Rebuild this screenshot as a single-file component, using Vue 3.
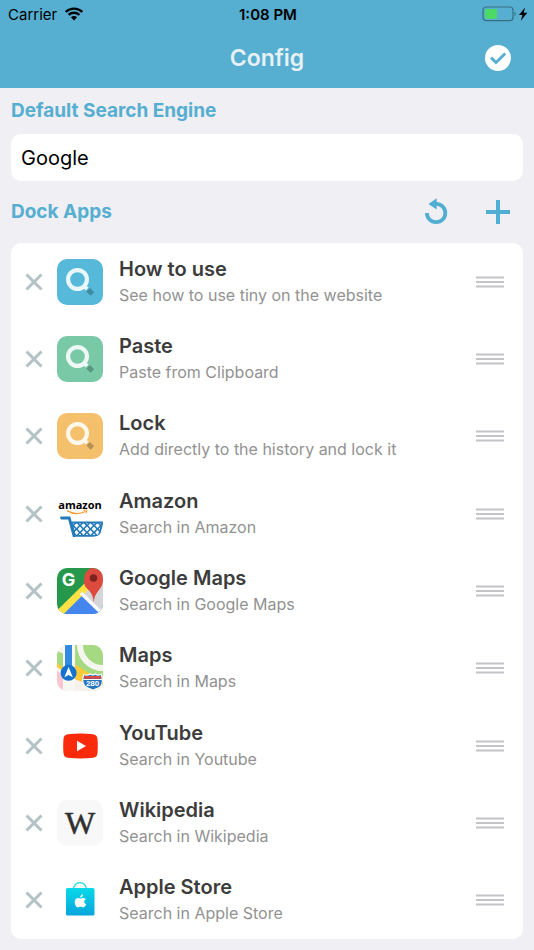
<!-- src/views/ConfigView.vue -->
<template>
  <div class="config-page">
    <header class="top-bar">
      <div class="status-bar">
        <div class="carrier">
          <span>Carrier</span>
          <svg width="18" height="14" viewBox="0 0 18 14" aria-hidden="true">
            <path d="M.7 4.9C5.2.5 12.800.5 17.300 4.900M3.600 7.800c3-2.800 7.800-2.800 10.800 0" fill="none" stroke="#000" stroke-width="2.400" />
            <path d="M5.900 10.200c1.800-1.600 4.400-1.600 6.200 0L9 13.400z" />
          </svg>
        </div>
        <span class="clock">1:08 PM</span>
        <svg class="battery" width="46" height="16" viewBox="0 0 46 16" aria-hidden="true">
          <rect x="1" y="1" width="30" height="13.600" rx="3" fill="none" stroke="#377083" stroke-width="1.200" />
          <rect x="3" y="3" width="12" height="9.800" rx="1" fill="#4cd964" />
          <path d="M32.500 5.600c1.600.8 1.600 3.800 0 4.600z" fill="#377083" />
          <path d="m43 1.500-6 7.400h3.400l-1.600 5.800 6.500-7.900h-3.600z" />
        </svg>
      </div>
      <div class="nav-bar">
        <h1>Config</h1>
        <button class="icon-button done" type="button" aria-label="Done">
          <svg width="26" height="26" viewBox="0 0 26 26">
            <circle cx="13" cy="13" r="13" fill="#fff" />
            <path d="m6 12.600 5 4.900 9.200-9" fill="none" stroke="#56aed0" stroke-width="2.900" />
          </svg>
        </button>
      </div>
    </header>

    <main class="content">
      <label class="section-title" for="engine">Default Search Engine</label>
      <input id="engine" v-model="engine" class="engine-field" type="text" />

      <div class="dock-header">
        <h2 class="section-title">Dock Apps</h2>
        <div class="dock-actions">
          <button class="icon-button" type="button" aria-label="Reset" @click="resetApps">
            <svg width="24" height="28" viewBox="0 0 24 28">
              <path d="M2.900 15A9.200 9.200 0 1 0 12 5.800" fill="none" stroke="#50aed2" stroke-width="3.800" />
              <path d="M12.700.2v11.400L4.500 5.900z" fill="#50aed2" />
            </svg>
          </button>
          <button class="icon-button" type="button" aria-label="Add app">
            <svg width="24" height="24" viewBox="0 0 24 24">
              <path d="M12 0v24M0 12h24" stroke="#50aed2" stroke-width="4" />
            </svg>
          </button>
        </div>
      </div>

      <ul class="app-list">
        <li v-for="app in apps" :key="app.id" class="app-row">
          <button class="icon-button" type="button" :aria-label="'Remove ' + app.name" @click="removeApp(app.id)">
            <svg width="18" height="18" viewBox="0 0 18 18">
              <path d="m1.500 1.500 15 15m0-15-15 15" stroke="#b3c3c5" stroke-width="3" />
            </svg>
          </button>

          <svg class="app-icon" width="46" height="46" viewBox="0 0 46 46" aria-hidden="true">
            <g v-if="app.tint">
              <rect width="46" height="46" :fill="app.tint" />
              <path d="m31.200 30.700 4.200 4.200" stroke="#000" stroke-width="5" opacity=".25" />
              <g fill="none" stroke="#fff">
                <circle cx="20.500" cy="20.500" r="9.400" stroke-width="4.200" opacity=".87" />
                <path d="m28.200 28.200 2 2" stroke-width="4" opacity=".87" />
              </g>
            </g>

            <g v-else-if="app.id === 'amazon'">
              <defs>
                <pattern id="cart-mesh" width="7" height="7" patternUnits="userSpaceOnUse" x="16" y="31">
                  <rect width="7" height="7" fill="#2479b8" />
                  <path d="m3.500 1 2.300 2.500L3.500 6 1.200 3.500zM0-2.500 2.300 0 0 2.500-2.300 0zM7-2.500 9.300 0 7 2.500 4.700 0zM0 4.500 2.300 7 0 9.500-2.300 7zM7 4.500 9.300 7 7 9.500 4.700 7z" fill="#fff" />
                </pattern>
              </defs>
              <text x="23" y="18" text-anchor="middle" class="amazon-word">amazon</text>
              <path d="M10 19.600c6 3.600 12.500 3.800 18.500.9" fill="none" stroke="#f79a2b" stroke-width="1.300" />
              <path d="m26.300 19.300 3.600-.2-.8 3.200" fill="none" stroke="#f79a2b" />
              <path d="M14.500 31.500h31l-3.600 13.300H18z" fill="url(#cart-mesh)" stroke="#2479b8" stroke-width="1.800" />
              <path d="M4.500 27h7.700l4.800 17.800" fill="none" stroke="#2479b8" stroke-width="2.800" stroke-linecap="round" />
            </g>

            <g v-else-if="app.id === 'google-maps'">
              <rect width="46" height="46" fill="#26984b" />
              <path d="M24.500 25.500 46 4v42z" fill="#d5d6da" />
              <path d="M4 46 24.500 25.500 45 46z" fill="#4485ee" />
              <path d="M0 42.500 29 14l4 6L7 46H0z" fill="#fee144" />
              <path d="M7 46 24.500 28.500 42 46z" fill="#4485ee" />
              <path d="m24 25 22 21.500" stroke="#fff" stroke-width="3.400" />
              <path d="M36.700 35c-.4-7.400-2.600-10.200-6.400-14.200A10.600 10.600 0 0 1 27.200 10.900C27.200 4.800 31.200 0 36.600 0S46 4.500 46 10.900c0 4-1 7.400-3.100 9.800-3.700 4.700-5.500 7.100-6.200 14.300z" fill="#dc4b3e" />
              <circle cx="36.500" cy="10" r="3.800" fill="#7e2420" />
              <text x="11.500" y="18" text-anchor="middle" class="google-letter">G</text>
            </g>

            <g v-else-if="app.id === 'maps'">
              <rect width="46" height="46" fill="#f4f2ea" />
              <path d="M17 0h29v40L17 21z" fill="#a5da83" />
              <path d="M0 26 17 37v9H0z" fill="#f9c6d0" />
              <path d="M23 0a23 23 0 0 0 23 23" fill="none" stroke="#f6f5ef" stroke-width="6" />
              <path d="M0 8v14l46 31V37z" fill="#fdcb39" />
              <path d="M17 34v12h29V42l-12-2z" fill="#f4f2ea" />
              <path d="M0 6v12l7 5V9z" fill="#a5da83" />
              <path d="M6 0h12v46H6z" fill="#f7f7f4" />
              <path d="M8 0h7v25H8z" fill="#338be1" />
              <circle cx="11.600" cy="27.800" r="8" fill="#1473cf" />
              <path d="m11.600 22 4.200 10.200-4.200-2.200-4.200 2.200z" fill="#fff" />
              <path d="M27 29.500c2.300 1 4.200.7 6-.5 1.500 1 4 1 5.500 0 1.600 1.200 3.800 1.300 5.700.3 1.400 4.500 2.100 8.700-.3 11.700-1.800 2.200-4.700 2.200-8 4.200-3.400-2-6.300-1.800-8.300-4.300-2.500-3.400-2.400-7.400-.6-11.400z" fill="#2877bd" stroke="#fff" stroke-width="1.200" />
              <path d="M27.300 31h16.800v2.800H27z" fill="#d94745" />
              <path d="M26.200 34.500h18.700" stroke="#fff" />
              <text x="35.600" y="41" text-anchor="middle" class="route-number">280</text>
            </g>

            <g v-else-if="app.id === 'youtube'">
              <path d="M11 11.200c8-.8 17-.8 25 0 3 .3 4.200 1.800 4.500 4.800.4 4.500.4 9.500 0 14-.3 3-1.500 4.500-4.500 4.800-8 .8-17 .8-25 0-3-.3-4.200-1.800-4.500-4.800-.4-4.500-.4-9.500 0-14 .3-3 1.500-4.500 4.500-4.800z" fill="#fb2a0a" />
              <path d="m20 17.800 9 5.200-9 5.200z" fill="#fff" />
            </g>

            <g v-else-if="app.id === 'wikipedia'">
              <rect width="46" height="46" fill="#f8f8f8" />
              <text x="23" y="34" text-anchor="middle" class="wiki-letter">W</text>
            </g>

            <g v-else>
              <defs>
                <linearGradient id="bag" x1="0" y1="0" x2="0" y2="1">
                  <stop offset="0" stop-color="#08d9e9" />
                  <stop offset="1" stop-color="#07a5dc" />
                </linearGradient>
              </defs>
              <path d="M16.500 12a6.400 6.400 0 0 1 12.800 0" fill="none" stroke="#25dce2" stroke-width="1.400" />
              <rect x="9" y="11" width="28.500" height="27.500" rx="1.500" fill="url(#bag)" />
              <path d="M23.300 20.600c-.1-1.800 1-3 2.700-3.300.1 1.800-1 3.200-2.700 3.300z" fill="#fff" />
              <path d="M23.200 21.600c1.200 0 2-.8 3.300-.6 1 .1 1.700.5 2.200 1.200-2.200 1.400-1.900 4 .5 4.900-.5 1.500-1.700 3.300-3 3.300-1 0-1.500-.6-2.600-.6-1.200 0-1.600.6-2.600.6-1.800 0-3.300-3-3.300-5.400 0-4 3.200-4.600 5.500-3.400z" fill="#fff" />
            </g>
          </svg>

          <div class="app-text">
            <h3>{{ app.name }}</h3>
            <p>{{ app.description }}</p>
          </div>

          <button class="icon-button" type="button" :aria-label="'Move ' + app.name">
            <svg width="28" height="12" viewBox="0 0 28 12">
              <path d="M0 1.500h28M0 6h28M0 10.500h28" stroke="#c3c4c8" stroke-width="1.800" />
            </svg>
          </button>
        </li>
      </ul>
    </main>
  </div>
</template>

<script setup>
import { ref } from 'vue';

const defaultApps = [
  { id: 'how-to-use', name: 'How to use', description: 'See how to use tiny on the website', tint: '#56b9d9' },
  { id: 'paste', name: 'Paste', description: 'Paste from Clipboard', tint: '#79c9a7' },
  { id: 'lock', name: 'Lock', description: 'Add directly to the history and lock it', tint: '#f5c06c' },
  { id: 'amazon', name: 'Amazon', description: 'Search in Amazon' },
  { id: 'google-maps', name: 'Google Maps', description: 'Search in Google Maps' },
  { id: 'maps', name: 'Maps', description: 'Search in Maps' },
  { id: 'youtube', name: 'YouTube', description: 'Search in Youtube' },
  { id: 'wikipedia', name: 'Wikipedia', description: 'Search in Wikipedia' },
  { id: 'apple-store', name: 'Apple Store', description: 'Search in Apple Store' }
];

const engine = ref('Google');
const apps = ref([...defaultApps]);

function removeApp(id) {
  apps.value = apps.value.filter((app) => app.id !== id);
}

function resetApps() {
  apps.value = [...defaultApps];
}
</script>

<style>
body {
  background-color: #efeff4;
}
</style>

<style scoped>
.config-page {
  min-height: 100vh;
  display: flex;
  flex-direction: column;
  box-sizing: border-box;
  padding-bottom: 11px;
  font-family: Inter, "Liberation Sans", sans-serif;
}

h1,
h2,
h3,
p,
ul {
  margin: 0;
  padding: 0;
}

svg {
  display: block;
}

.icon-button {
  padding: 0;
  border: 0;
  background: none;
  cursor: pointer;
}

/* Header */
.top-bar {
  background-color: #56aed0;
}

.status-bar,
.nav-bar {
  display: grid;
  grid-template-columns: 1fr auto 1fr;
  align-items: center;
}

.status-bar {
  height: 28px;
  padding: 0 6px 0 8px;
  font-size: 15px;
}

.carrier {
  display: flex;
  align-items: center;
  gap: 8px;
}

.clock {
  font-weight: 600;
}

.battery {
  justify-self: end;
}

.nav-bar {
  height: 60px;
  padding: 0 23px;
}

.nav-bar h1 {
  grid-column: 2;
  color: #e6f1f5;
  font-size: 23px;
  font-weight: 600;
}

.done {
  justify-self: end;
}

/* Content */
.content {
  flex: 1;
  display: flex;
  flex-direction: column;
  padding: 0 11px;
}

.section-title {
  color: #56aed0;
  font-size: 19px;
  font-weight: 700;
  line-height: 46px;
}

.engine-field {
  height: 47px;
  padding: 0 10px;
  border: 0;
  border-radius: 10px;
  background-color: #fff;
  color: #000;
  font-family: inherit;
  font-size: 20px;
}

.dock-header {
  display: flex;
  align-items: center;
  justify-content: space-between;
  height: 62px;
}

.dock-actions {
  display: flex;
  align-items: center;
  gap: 38px;
  padding-right: 13px;
}

.app-list {
  flex: 1;
  display: grid;
  grid-auto-rows: minmax(77px, 1fr);
  border-radius: 10px;
  background-color: #fff;
  list-style: none;
}

.app-row {
  display: flex;
  align-items: center;
  padding: 0 19px 0 14px;
}

.app-icon {
  margin: 0 16px 0 14px;
  border-radius: 10px;
}

.app-text {
  flex: 1;
}

.app-text h3 {
  color: #3c3c3c;
  font-size: 20px;
  font-weight: 600;
  line-height: 26px;
}

.app-text p {
  color: #929292;
  font-size: 16px;
  line-height: 26px;
}

.amazon-word {
  font: bold 11px "Open Sans", sans-serif;
}

.google-letter {
  fill: #fff;
  font: bold 18px Inter, sans-serif;
}

.route-number {
  fill: #fff;
  font: bold 8px "Liberation Sans", sans-serif;
}

.wiki-letter {
  fill: #303030;
  stroke: #303030;
  stroke-width: 0.5px;
  font: 32px "Liberation Serif", serif;
}
</style>
